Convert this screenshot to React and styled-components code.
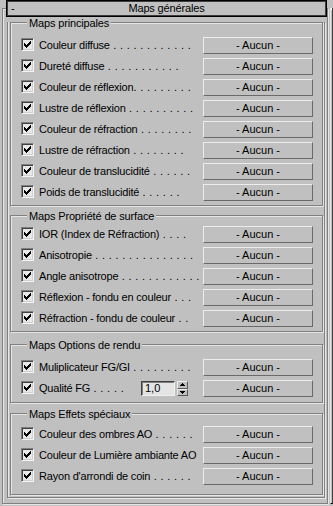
import React from 'react';
import styled, { createGlobalStyle } from 'styled-components';

const GlobalStyle = createGlobalStyle`
  html, body {
    margin: 0;
    padding: 0;
    background: #c0c0c0;
  }
  body {
    font-family: "Liberation Sans", Arial, sans-serif;
    font-size: 11px;
    color: #000;
  }
`;

const groups = [
  {
    title: 'Maps principales',
    top: 5, gap: 8, bottom: 4,
    rows: [
      { text: 'Couleur diffuse', dots: 12 },
      { text: 'Dureté diffuse', dots: 11 },
      { text: 'Couleur de réflexion', dots: 9, tight: true },
      { text: 'Lustre de réflexion', dots: 10 },
      { text: 'Couleur de réfraction', dots: 8 },
      { text: 'Lustre de réfraction', dots: 8 },
      { text: 'Couleur de translucidité', dots: 6 },
      { text: 'Poids de translucidité', dots: 6 },
    ],
  },
  {
    title: 'Maps Propriété de surface',
    top: 9, gap: 4, bottom: 4,
    rows: [
      { text: 'IOR (Index de Réfraction)', dots: 4 },
      { text: 'Anisotropie', dots: 15 },
      { text: 'Angle anisotrope', dots: 12 },
      { text: 'Réflexion - fondu en couleur', dots: 3 },
      { text: 'Réfraction - fondu de couleur', dots: 2 },
    ],
  },
  {
    title: 'Maps Options de rendu',
    top: 12, gap: 8, bottom: 5,
    rows: [
      { text: 'Muliplicateur FG/GI', dots: 9 },
      { text: 'Qualité FG', dots: 5, spinner: '1,0' },
    ],
  },
  {
    title: 'Maps Effets spéciaux',
    top: 10, gap: 6, bottom: 9,
    rows: [
      { text: 'Couleur des ombres AO', dots: 6 },
      { text: 'Couleur de Lumière ambiante AO', dots: 0 },
      { text: "Rayon d'arrondi de coin", dots: 6 },
    ],
  },
];

const CheckMark = () => (
  <svg width="7" height="7" viewBox="0 0 7 7" shapeRendering="crispEdges">
    <path
      fill="#000"
      d="M6 0h1v3h-1v1h-1v1h-1v1h-1v1h-1v-1h-1v-1h-1v-3h1v1h1v1h1v-1h1v-1h1z"
    />
  </svg>
);

const SpinArrow = ({ up }) => (
  <svg width="5" height="3" viewBox="0 0 5 3" shapeRendering="crispEdges">
    <path fill="#000" d={up ? 'M2 0h1v1h1v1h1v1h-5v-1h1v-1h1z' : 'M0 0h5v1h-1v1h-1v1h-1v-1h-1v-1h-1z'} />
  </svg>
);

const App = () => {
  return (
    <Screen>
      <GlobalStyle />
      <Frame>
        <Header>
          <Toggle>-</Toggle>
          <HeaderTitle>Maps générales</HeaderTitle>
          <span />
        </Header>
        <Body>
          {groups.map((g) => (
            <Group key={g.title} $top={g.top} $bottom={g.bottom}>
              <Legend>{g.title}</Legend>
              <Rows $gap={g.gap}>
                {g.rows.map((r) => (
                  <Row key={r.text}>
                    <Check><CheckMark /></Check>
                    <Label>
                      <LabelText>{r.text}</LabelText>
                      {r.dots > 0 && (
                        <Dots>{(r.tight ? '' : ' ') + Array(r.dots).fill('.').join(' ')}</Dots>
                      )}
                    </Label>
                    {r.spinner && (
                      <Spinner>
                        <SpinField>{r.spinner}</SpinField>
                        <SpinButtons>
                          <SpinButton><SpinArrow up /></SpinButton>
                          <SpinButton><SpinArrow /></SpinButton>
                        </SpinButtons>
                      </Spinner>
                    )}
                    <MapButton>- Aucun -</MapButton>
                  </Row>
                ))}
              </Rows>
            </Group>
          ))}
        </Body>
      </Frame>
      <ScrollThumb>
        <ThumbTick />
      </ScrollThumb>
    </Screen>
  );
};

export default App;

const Screen = styled.div`
  display: flex;
  align-items: flex-start;
  width: 333px;
  height: 506px;
  padding-left: 2px;
  box-sizing: border-box;
  overflow: hidden;
  background: #c0c0c0;
`;

const Frame = styled.div`
  margin-top: 8px;
  width: 327px;
  height: 496px;
  box-sizing: border-box;
  border: 1px solid #808080;
  box-shadow: 1px 1px 0 #e6e6e6, inset 1px 1px 0 #e6e6e6;
`;

const Header = styled.div`
  display: grid;
  grid-template-columns: 20px 1fr 20px;
  align-items: center;
  margin: -9px 0 0 3px;
  height: 17px;
  box-sizing: border-box;
  border: 1px solid #000;
  box-shadow: inset 1px 1px 0 #3c3c3c, inset -1px -1px 0 #3c3c3c;
  background: #c0c0c0;
  line-height: 13px;
`;

const Toggle = styled.span`
  padding-left: 4px;
`;

const HeaderTitle = styled.span`
  text-align: center;
  letter-spacing: -0.15px;
`;

const Body = styled.div`
  margin: 0 2px 0 4px;
  padding: 0 1px 2px 2px;
  border: 1px solid #808080;
  border-top: none;
  box-shadow: 1px 1px 0 #e6e6e6, inset 1px 0 0 #e6e6e6;
`;

const Group = styled.div`
  margin-top: ${(p) => p.$top}px;
  padding: 0 9px ${(p) => p.$bottom}px 10px;
  border: 1px solid #808080;
  box-shadow: 1px 1px 0 #e6e6e6, inset 1px 1px 0 #e6e6e6;
`;

const Legend = styled.div`
  display: table;
  margin: -6px 0 0 6px;
  padding: 0 2px;
  line-height: 12px;
  letter-spacing: -0.15px;
  background: #c0c0c0;
`;

const Rows = styled.div`
  display: flex;
  flex-direction: column;
  gap: 4px;
  margin-top: ${(p) => p.$gap}px;
`;

const Row = styled.div`
  display: flex;
  align-items: center;
  height: 17px;
`;

const Check = styled.span`
  display: flex;
  align-items: center;
  justify-content: center;
  flex: none;
  width: 13px;
  height: 13px;
  box-sizing: border-box;
  margin-top: -2px;
  border: 1px solid;
  border-color: #808080 #f4f4f4 #f4f4f4 #808080;
  box-shadow: inset 1px 1px 0 #404040, inset -1px -1px 0 #d0d0d0;
  background: #e8e8e8;
  svg {
    display: block;
  }
`;

const Label = styled.span`
  flex: 1;
  margin-left: 5px;
  white-space: nowrap;
  overflow: hidden;
  line-height: 13px;
`;

const LabelText = styled.span`
  letter-spacing: -0.2px;
`;

const Dots = styled.span`
  letter-spacing: 0.33px;
`;

const MapButton = styled.div`
  flex: none;
  width: 110px;
  height: 17px;
  box-sizing: border-box;
  border: 1px solid;
  border-color: #ececec #6a6a6a #6a6a6a #ececec;
  background: #c0c0c0;
  text-align: center;
  line-height: 15px;
`;

const Spinner = styled.div`
  display: flex;
  gap: 2px;
  margin: 0 15px 0 auto;
  flex: none;
`;

const SpinField = styled.div`
  width: 34px;
  height: 15px;
  box-sizing: border-box;
  padding-left: 3px;
  border: 1px solid;
  border-color: #404040 #f0f0f0 #f0f0f0 #404040;
  box-shadow: inset 1px 1px 0 #808080;
  background: #e4e4e4;
  line-height: 13px;
`;

const SpinButtons = styled.div`
  display: flex;
  flex-direction: column;
  width: 11px;
  height: 15px;
`;

const SpinButton = styled.div`
  display: flex;
  align-items: center;
  justify-content: center;
  flex: 1;
  box-sizing: border-box;
  border: 1px solid;
  border-color: #ececec #5a5a5a #5a5a5a #ececec;
  svg {
    display: block;
  }
`;

const ScrollThumb = styled.div`
  position: relative;
  margin: 8px 0 0 2px;
  width: 3px;
  height: 496px;
  box-sizing: border-box;
  border-left: 1px solid #e6e6e6;
  border-right: 1px solid #404040;
  border-bottom: 1px solid #000;
`;

const ThumbTick = styled.div`
  position: absolute;
  top: 0;
  left: 0;
  width: 1px;
  height: 2px;
  background: #fff;
`;
